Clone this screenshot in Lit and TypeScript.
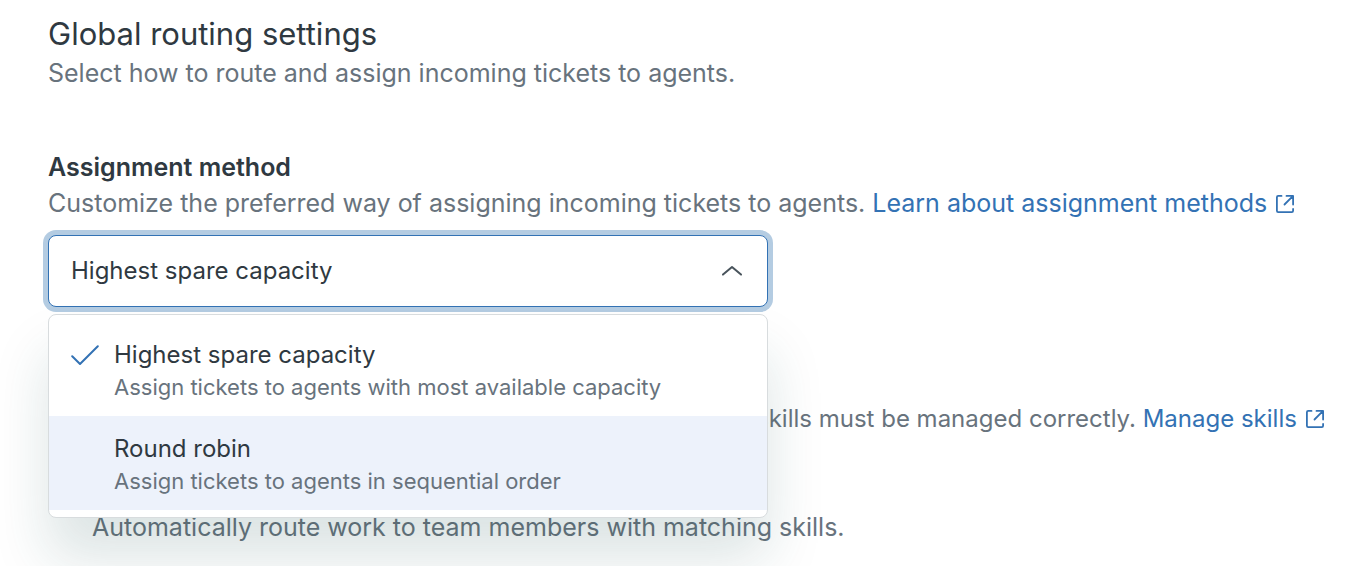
import { LitElement, html, css, svg, nothing } from "lit";
import { customElement, state } from "lit/decorators.js";

interface Method {
  value: string;
  label: string;
  description: string;
}

const METHODS: Method[] = [
  {
    value: "capacity",
    label: "Highest spare capacity",
    description: "Assign tickets to agents with most available capacity",
  },
  {
    value: "round-robin",
    label: "Round robin",
    description: "Assign tickets to agents in sequential order",
  },
];

const externalIcon = html`<svg class="external" viewBox="0 0 20 20" aria-hidden="true">
  ${svg`<path d="M6.5 1.9H3.2Q1.9 1.9 1.9 3.2V16.8Q1.9 18.1 3.2 18.1H16.8Q18.1 18.1 18.1 16.8V15M11.5 1.9H18.1V10.5M17.8 2.2L9.5 10.5" />`}
</svg>`;

@customElement("app-root")
export class AppRoot extends LitElement {
  static styles = css`
    :host {
      display: block;
      box-sizing: border-box;
      min-height: 100vh;
      padding: 13px 40px 0 48px;
      overflow: hidden;
      background: #fff;
      color: #2f3941;
      font-family: Inter, "Liberation Sans", sans-serif;
      font-size: 24px;
      line-height: 36px;
    }
    .title,
    .hint,
    .label {
      margin: 0;
      font-weight: 400;
    }
    .title {
      font-size: 31px;
      line-height: 42px;
    }
    .hint {
      color: #68737d;
      font-size: 25px;
    }
    .label {
      display: block;
      font-size: 25px;
      font-weight: 600;
    }
    .method {
      margin-top: 58px;
    }
    .link {
      color: #3372b4;
      text-decoration: none;
      white-space: nowrap;
    }
    .external {
      width: 20px;
      height: 20px;
      margin-left: 8px;
      vertical-align: -2px;
      fill: none;
      stroke: currentColor;
      stroke-width: 1.8;
      stroke-linejoin: round;
      stroke-linecap: round;
    }
    .field {
      position: relative;
      max-width: 720px;
      margin-top: 14px;
    }
    .select {
      display: block;
      box-sizing: border-box;
      width: 100%;
      height: 72px;
      padding: 0 64px 0 22px;
      border: 1px solid #3372b4;
      border-radius: 8px;
      outline: none;
      appearance: none;
      background: #fff;
      box-shadow: 0 0 0 5px #b4cce2;
      color: inherit;
      font: inherit;
    }
    .chevron {
      position: absolute;
      top: 26px;
      right: 26px;
      width: 20px;
      height: 20px;
      fill: none;
      stroke: #49545c;
      stroke-width: 2;
      stroke-linecap: round;
      stroke-linejoin: round;
      pointer-events: none;
    }
    .menu {
      position: absolute;
      z-index: 1;
      top: 79px;
      left: 0;
      right: 0;
      margin: 0;
      padding: 7px 0;
      border: 1px solid #d8dcde;
      border-radius: 8px;
      background: #fff;
      box-shadow: 0 40px 56px 0 rgba(23, 73, 77, 0.15);
      list-style: none;
    }
    .option {
      display: grid;
      grid-template-columns: 28px 1fr;
      column-gap: 15px;
      padding: 16px 22px 14px;
      cursor: pointer;
    }
    .option.active {
      background: #edf2fb;
    }
    .name {
      grid-column: 2;
      line-height: 34px;
    }
    .description {
      grid-column: 2;
      color: #68737d;
      font-size: 22px;
      line-height: 30px;
    }
    .check {
      grid-row: 1;
      grid-column: 1;
      align-self: center;
      width: 28px;
      height: 22px;
      fill: none;
      stroke: #3372b4;
      stroke-width: 2;
      stroke-linecap: round;
      stroke-linejoin: round;
    }
    .skills {
      margin-top: 94px;
    }
    .managed {
      padding-left: 708px;
      font-size: 24px;
      white-space: nowrap;
    }
    .routing {
      margin-top: 72px;
      padding-left: 44px;
    }
  `;

  @state() private open = true;
  @state() private selected = "capacity";
  @state() private active = "round-robin";

  private toggle(event: Event) {
    event.preventDefault();
    this.open = !this.open;
  }

  private choose(value: string) {
    this.selected = value;
    this.open = false;
  }

  private renderOption(method: Method) {
    const chosen = method.value === this.selected;
    return html`<li
      class="option ${method.value === this.active ? "active" : ""}"
      role="option"
      aria-selected=${chosen ? "true" : "false"}
      @mouseenter=${() => (this.active = method.value)}
      @click=${() => this.choose(method.value)}
    >
      ${chosen
        ? html`<svg class="check" viewBox="0 0 28 22" aria-hidden="true">
            <path d="M1.2 12.2L9 20L26.8 2.2" />
          </svg>`
        : nothing}
      <span class="name">${method.label}</span>
      <span class="description">${method.description}</span>
    </li>`;
  }

  render() {
    return html`
      <header>
        <h1 class="title">Global routing settings</h1>
        <p class="hint">Select how to route and assign incoming tickets to agents.</p>
      </header>
      <section class="method">
        <label class="label" for="method">Assignment method</label>
        <p class="hint" id="method-hint">
          Customize the preferred way of assigning incoming tickets to agents.
          <a class="link" href="#assignment-methods">Learn about assignment methods${externalIcon}</a>
        </p>
        <div class="field">
          <select
            id="method"
            class="select"
            aria-describedby="method-hint"
            .value=${this.selected}
            @mousedown=${this.toggle}
            @change=${(e: Event) => this.choose((e.target as HTMLSelectElement).value)}
          >
            ${METHODS.map(
              (m) => html`<option value=${m.value} ?selected=${m.value === this.selected}>${m.label}</option>`
            )}
          </select>
          <svg class="chevron" viewBox="0 0 20 20" aria-hidden="true">
            <path d=${this.open ? "M1 13.6L10 6L19 13.6" : "M1 6L10 13.6L19 6"} />
          </svg>
          ${this.open
            ? html`<ul class="menu" role="listbox" aria-label="Assignment method">
                ${METHODS.map((m) => this.renderOption(m))}
              </ul>`
            : nothing}
        </div>
      </section>
      <section class="skills">
        <p class="hint managed">
          skills must be managed correctly.
          <a class="link" href="#skills">Manage skills${externalIcon}</a>
        </p>
        <p class="hint routing">Automatically route work to team members with matching skills.</p>
      </section>
    `;
  }
}
